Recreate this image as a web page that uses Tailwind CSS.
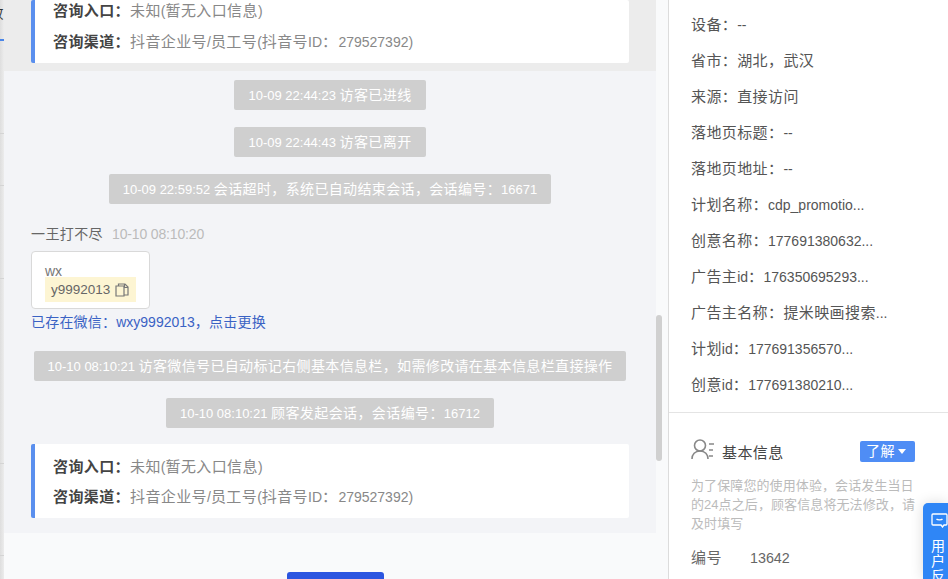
<!DOCTYPE html>
<html><head><meta charset="utf-8"><script src="https://cdn.jsdelivr.net/npm/@tailwindcss/browser@4"></script></head>
<body class="m-0">
<div class="relative flex w-[948px] h-[579px] overflow-hidden bg-white text-[15px] tracking-[.4px] text-[#666] font-['Liberation_Sans','Noto_Sans_CJK_SC',sans-serif]">
  <div class="relative w-[4px] shrink-0 bg-gradient-to-r from-[#dedede] to-[#ececec] flex flex-col overflow-hidden">
    <span class="absolute right-0 top-[5px] text-[14px] leading-[16px] text-[#333] whitespace-nowrap">效</span>
    <div class="h-[41px] border-b-2 border-[#4a86e8]"></div>
    <div class="h-[93px] border-b border-[#d4d4d4]"></div>
    <div class="h-[52px] border-b border-[#d4d4d4]"></div>
    <div class="h-[93px] border-b border-[#d4d4d4]"></div>
    <div class="h-[185px] border-b border-[#d4d4d4]"></div>
    <div class="h-[92px] border-b border-[#d4d4d4]"></div>
  </div>
  <div class="w-[665px] shrink-0 relative flex flex-col bg-[#f9fafb] border-r border-[#dcdcdc]">
    <div class="absolute left-[652px] top-[315px] w-[6px] h-[146px] rounded-[3px] bg-[#d0d0d0]"></div>
    <div class="w-[652px] h-[533px] bg-[#f3f4f7] flex flex-col">
      <div class="h-[71px] bg-[#ececec] pl-[27px] shrink-0">
        <div class="w-[598px] h-[63px] bg-white border-l-4 border-[#5a8fee] rounded-[2px] pl-[18px] flex flex-col leading-[20px] pt-[1px] gap-[11px]">
          <div class="text-[#888]"><b class="font-bold text-[#444]">咨询入口：</b>未知<span class="text-[14px] tracking-normal">(</span>暂无入口信息<span class="text-[14px] tracking-normal">)</span></div>
          <div class="text-[#888]"><b class="font-bold text-[#444]">咨询渠道：</b>抖音企业号<span class="text-[14px] tracking-normal">/</span>员工号<span class="text-[14px] tracking-normal">(</span>抖音号<span class="text-[14px] tracking-normal">ID</span>：<span class="ml-[1px] text-[14px] tracking-normal">279527392)</span></div>
        </div>
      </div>
      <div class="flex flex-col items-center mt-[9px] gap-[17px] text-[14px]">
        <div class="h-[30px] leading-[30px] px-[14px] bg-[#cfcfcf] text-white rounded-[2px]"><span class="text-[13px] tracking-normal">10-09 22:44:23 </span>访客已进线</div>
        <div class="h-[30px] leading-[30px] px-[14px] bg-[#cfcfcf] text-white rounded-[2px]"><span class="text-[13px] tracking-normal">10-09 22:44:43 </span>访客已离开</div>
        <div class="h-[30px] leading-[30px] px-[14px] bg-[#cfcfcf] text-white rounded-[2px] tracking-[.36px]"><span class="text-[13px] tracking-normal">10-09 22:59:52 </span>会话超时，系统已自动结束会话，会话编号：<span class="text-[13px] tracking-normal">16671</span></div>
      </div>
      <div class="pl-[27px] mt-[20px] text-[14px]">
        <div class="h-[20px] leading-[20px] text-[#666]">一王打不尽<span class="ml-[9px] text-[#bbb] tracking-[-.15px]">10-10 08:10:20</span></div>
        <div class="mt-[7px] w-[119px] h-[58px] bg-white border border-[#d9d9d9] rounded-[4px] pl-[13px] pt-[11px] leading-[16px] tracking-normal">
          <div class="text-[#777]">wx</div>
          <div class="w-[91px] h-[25px] bg-[#fdf5d3] flex items-center pl-[6px] gap-[5px] text-[#666] text-[13.500px] -mt-[2px]">y9992013
            <svg width="14" height="14" viewBox="0 0 14 14" fill="none" stroke="#777" stroke-width="1.2"><path d="M1 3h8v10H1z"/><path d="M3.500 3V1H10l3 3v8h-4"/><path d="M9.500 1v3.500H13"/></svg>
          </div>
        </div>
        <div class="mt-[3px] h-[20px] leading-[20px] text-[#3a62c4] tracking-[.2px]">已存在微信：<span class="text-[14px] tracking-normal">wxy9992013</span>，点击更换</div>
      </div>
      <div class="flex flex-col items-center mt-[19px] gap-[17px] text-[14px]">
        <div class="h-[30px] leading-[30px] px-[14px] bg-[#cfcfcf] text-white rounded-[2px] tracking-[.36px]"><span class="text-[13px] tracking-normal">10-10 08:10:21 </span>访客微信号已自动标记右侧基本信息栏，如需修改请在基本信息栏直接操作</div>
        <div class="h-[30px] leading-[30px] px-[14px] bg-[#cfcfcf] text-white rounded-[2px]"><span class="text-[13px] tracking-normal">10-10 08:10:21 </span>顾客发起会话，会话编号：<span class="text-[13px] tracking-normal">16712</span></div>
      </div>
      <div class="ml-[27px] mt-[16px] w-[598px] h-[74px] bg-white border-l-4 border-[#5a8fee] rounded-[2px] pl-[18px] pt-[13px] flex flex-col leading-[20px] gap-[10px]">
        <div class="text-[#888]"><b class="font-bold text-[#444]">咨询入口：</b>未知<span class="text-[14px] tracking-normal">(</span>暂无入口信息<span class="text-[14px] tracking-normal">)</span></div>
        <div class="text-[#888]"><b class="font-bold text-[#444]">咨询渠道：</b>抖音企业号<span class="text-[14px] tracking-normal">/</span>员工号<span class="text-[14px] tracking-normal">(</span>抖音号<span class="text-[14px] tracking-normal">ID</span>：<span class="ml-[1px] text-[14px] tracking-normal">279527392)</span></div>
      </div>
    </div>
    <div class="absolute left-[283px] top-[572px] w-[97px] h-[20px] bg-[#2b55e0] rounded-[3px]"></div>
  </div>
  <div class="flex-1 min-w-0">
    <div class="pl-[22px] pt-[15px] h-[413px] border-b border-[#e4e4e4] flex flex-col gap-[16px] leading-[20px] text-[#555]">
      <div>设备：<span class="text-[14px] tracking-normal">--</span></div>
      <div>省市：湖北，武汉</div>
      <div>来源：直接访问</div>
      <div>落地页标题：<span class="text-[14px] tracking-normal">--</span></div>
      <div>落地页地址：<span class="text-[14px] tracking-normal">--</span></div>
      <div>计划名称：<span class="text-[14px] tracking-normal">cdp_promotio...</span></div>
      <div>创意名称：<span class="text-[14px] tracking-normal">177691380632...</span></div>
      <div>广告主<span class="text-[14px] tracking-normal">id</span>：<span class="text-[14px] tracking-normal">176350695293...</span></div>
      <div>广告主名称：提米映画搜索<span class="text-[14px] tracking-normal">...</span></div>
      <div>计划<span class="text-[14px] tracking-normal">id</span>：<span class="text-[14px] tracking-normal">177691356570...</span></div>
      <div>创意<span class="text-[14px] tracking-normal">id</span>：<span class="text-[14px] tracking-normal">177691380210...</span></div>
    </div>
    <div class="pl-[22px] pr-[33px]">
      <div class="mt-[27px] h-[22px] flex items-center">
        <svg width="24" height="21" viewBox="0 0 24 21" fill="none" stroke="#888" stroke-width="1.600" class="-mt-[3px]"><ellipse cx="9" cy="6.500" rx="5.500" ry="5.500"/><path d="M1 20c0-4.500 3-8 8-8s8 3.500 8 8"/><path d="M18 5h5M18 11h4M18 17h4"/></svg>
        <span class="ml-[7px] mt-[4px] text-[#444]">基本信息</span>
        <span class="ml-auto w-[55px] h-[21px] bg-[#4f8df5] text-white text-[14px] rounded-[2px] flex items-center pl-[6px] leading-[21px]">了解<svg class="ml-[3px]" width="8" height="5" viewBox="0 0 8 5"><path d="M0 0h8L4 5z" fill="#fff"/></svg></span>
      </div>
      <div class="mt-[14px] text-[13px] tracking-[.1px] leading-[19px] w-[228px] text-[#bbb]">为了保障您的使用体验，会话发生当日的<span class="tracking-normal">24</span>点之后，顾客信息将无法修改，请及时填写</div>
      <div class="mt-[15px] flex leading-[20px] text-[#666]"><span class="w-[59px]">编号</span><span class="text-[14.300px] tracking-normal">13642</span></div>
    </div>
  </div>
  <div class="absolute left-[923px] top-[503px] w-[25px] h-[76px] bg-[#2f86f6] rounded-tl-[5px] shadow-[0_0_14px_rgba(0,0,0,0.14)] flex flex-col items-start pl-[8px] pt-[10px] text-white text-[14px] tracking-normal leading-[15px] overflow-hidden">
    <svg class="shrink-0" width="17" height="15" viewBox="0 0 17 15" fill="none" stroke="#fff" stroke-width="1.300"><path d="M2 1h13a1 1 0 0 1 1 1v9a1 1 0 0 1-1 1h-2l-1.500 2-1.500-2H2a1 1 0 0 1-1-1V2a1 1 0 0 1 1-1z"/><path d="M5.500 6c1 1.200 5 1.200 6 0"/></svg>
    <span class="mt-[11px] shrink-0 whitespace-nowrap">用</span><span class="shrink-0">户</span><span class="shrink-0">反</span>
  </div>
</div>
</body></html>
